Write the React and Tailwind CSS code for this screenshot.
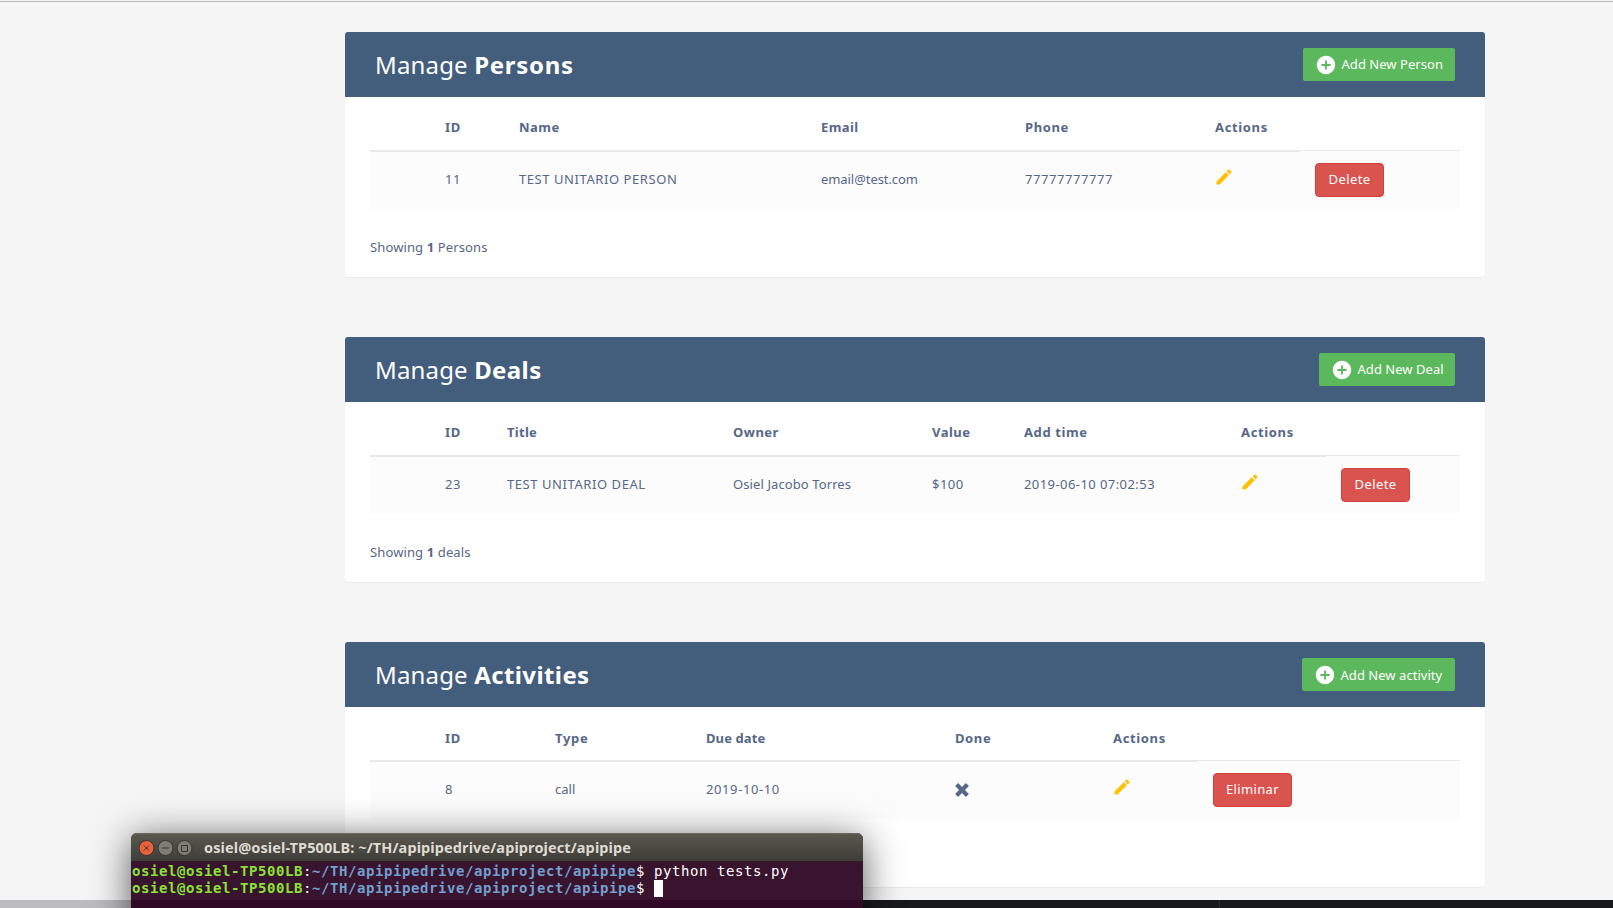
import React from "react";

const cards = [
  {
    name: "Persons", add: "Add New Person", addW: "w-[152px]", addPad: "pt-0", titleTrack: "tracking-[0.73px]",
    summary: "Persons", del: "Delete", delStyle: "w-[69px] tracking-[0.4px]", cols: "grid-cols-[60px_74px_302px_204px_190px_100px_160px]",
    headPad: "pb-[2px]",
    heads: [["ID", "tracking-[0.8px]"], ["Name", "tracking-[0.5px]"], ["Email", "tracking-[0.4px]"], ["Phone", "tracking-[0.6px]"], ["Actions", "tracking-[0.65px]"]],
    cells: [["11", "tracking-[0.5px]"], ["TEST UNITARIO PERSON", "tracking-[0.57px]"], ["email@test.com", "tracking-[-0.07px]"], ["77777777777", "tracking-[0.56px]"]],
  },
  {
    name: "Deals", add: "Add New Deal", addW: "w-[136px]", addPad: "pt-0", titleTrack: "tracking-[0.4px]",
    summary: "deals", del: "Delete", delStyle: "w-[69px] tracking-[0.4px]", cols: "grid-cols-[60px_62px_226px_199px_92px_217px_100px_134px]",
    headPad: "pb-[2px]",
    heads: [["ID", "tracking-[0.8px]"], ["Title", "tracking-[0.3px]"], ["Owner", "tracking-[0.5px]"], ["Value", "tracking-[0.5px]"], ["Add time", "tracking-[0.6px]"], ["Actions", "tracking-[0.65px]"]],
    cells: [["23", "tracking-[0.5px]"], ["TEST UNITARIO DEAL", "tracking-[0.57px]"], ["Osiel Jacobo Torres", "tracking-[0.1px]"], ["$100", "tracking-[0.5px]"], ["2019-06-10 07:02:53", "tracking-[0.43px]"]],
  },
  {
    name: "Activities", add: "Add New activity", addW: "w-[153px]", addPad: "pt-[2px]", titleTrack: "tracking-[0.4px]",
    summary: "", del: "Eliminar", delStyle: "w-[79px] tracking-[0.35px]", cols: "grid-cols-[60px_110px_151px_249px_158px_100px_262px]",
    headPad: "pb-0",
    heads: [["ID", "tracking-[0.8px]"], ["Type", "tracking-[0.7px]"], ["Due date", "tracking-[0.1px]"], ["Done", "tracking-[0.6px]"], ["Actions", "tracking-[0.65px]"]],
    cells: [["8", "tracking-[0.5px]"], ["call", "tracking-[0px]"], ["2019-10-10", "tracking-[0.6px]"], ["x", ""]],
  },
];

function Cross() {
  return (
    <svg className="h-[14px] w-[14px]" viewBox="0 0 14 14" fill="none" stroke="#566787" strokeWidth="4.2">
      <path d="M1.6 1.6 12.4 12.4M12.4 1.6 1.6 12.4" />
    </svg>
  );
}

function Card({ card }) {
  return (
    <section className="h-[245px] shrink-0 rounded-[3px] bg-white shadow-[0_1px_1px_rgba(0,0,0,0.05)]">
      <header className="flex h-[65px] items-start justify-between rounded-t-[3px] bg-[#435d7d] pt-4 pr-[30px] pl-[30px] text-white">
        <h2 className="text-[24px] leading-[34px] tracking-[0.15px]">
          Manage <b className={"font-bold " + card.titleTrack}>{card.name}</b>
        </h2>
        <button className={"flex h-[33px] items-center rounded-[2px] bg-[#5cb85c] pl-[12px] text-[13px] " + card.addW}>
          <svg className="mr-[4px] h-[22px] w-[22px] shrink-0" viewBox="0 0 24 24" fill="#fff">
            <path d="M12 2C6.48 2 2 6.48 2 12s4.48 10 10 10 10-4.48 10-10S17.520 2 12 2zm5 11h-4v4h-2v-4H7v-2h4V7h2v4h4v2z" />
          </svg>
          <span className={"pl-[0.5px] whitespace-nowrap tracking-[0.04px] " + card.addPad}>{card.add}</span>
        </button>
      </header>
      <div className="px-[25px] pt-[10px]">
        <div className={"grid h-[43px] text-[13px] font-bold " + card.cols}>
          <div />
          {card.heads.map(([h, track]) => (
            <div key={h} className={"flex items-center pl-[15px] " + card.headPad + " " + track}>{h}</div>
          ))}
        </div>
        <div className={"grid h-[59px] bg-[#fcfcfc] text-[13px] " + card.cols}>
          <div className="border-t-2 border-[#e9e9e9]" />
          {card.cells.map(([c, track]) => (
            <div key={c} className={"flex items-center border-t-2 border-[#e9e9e9] pb-px pl-[15px] whitespace-nowrap " + track}>
              {c === "x" ? <Cross /> : c}
            </div>
          ))}
          <div className="border-t-2 border-[#e9e9e9] pt-[15px] pl-[14px]">
            <svg className="h-[20px] w-[20px]" viewBox="0 0 24 24" fill="#ffc107">
              <path d="M3 17.250V21h3.750L17.810 9.940l-3.750-3.750L3 17.250zM20.710 7.040a1 1 0 0 0 0-1.410l-2.340-2.340a1 1 0 0 0-1.410 0l-1.830 1.830 3.750 3.750 1.830-1.830z" />
            </svg>
          </div>
          <div className="border-t border-[#e9e9e9] pt-3 pl-[15px]">
            <button className={"h-[34px] rounded-[4px] border border-[#d43f3a] bg-[#d9534f] text-[13px] text-white " + card.delStyle}>{card.del}</button>
          </div>
        </div>
        {card.summary && (
          <p className="pt-[28px] text-[13px] leading-[20px] tracking-[0.12px]">
            Showing <b>1</b> {card.summary}
          </p>
        )}
      </div>
    </section>
  );
}

export default function App() {
  return (
    <div className="relative h-[908px] w-[1613px] overflow-hidden bg-[#f5f5f5] font-['Noto_Sans',sans-serif] text-[#566787]">
      <div className="flex h-[900px] flex-col overflow-hidden">
        <div className="h-[2px] shrink-0 border-b border-[#bcbcbc] bg-[#f2f1f0]" />
        <main className="ml-[345px] flex w-[1140px] flex-col gap-[60px] pt-[30px]">
          {cards.map((c) => (
            <Card key={c.name} card={c} />
          ))}
        </main>
      </div>
      <div className="flex h-2 bg-[#18191b]">
        <div className="w-[296px] bg-[#bcbcbf]" />
        <div className="ml-[923px] w-px bg-[#2b2c2e]" />
      </div>
      <div className="absolute top-[833px] left-[131px] h-[90px] w-[732px] rounded-t-[6px] bg-[#39142e] shadow-[0_6px_38px_rgba(0,0,0,0.65)]">
        <div className="flex h-7 items-center rounded-t-[6px] border-t border-[#6b6a60] bg-gradient-to-b from-[#5a584e] to-[#3e3d38] pl-2">
          <svg className="h-4 w-[54px]" viewBox="0 0 54 16" fill="none" stroke="#35342f">
            <circle cx="7.500" cy="8" r="7.500" fill="#e9623a" />
            <path d="m5 5.500 5 5m0-5-5 5" />
            <circle cx="26.500" cy="8" r="7.500" fill="#7f7d76" />
            <path d="M23 8h7" />
            <circle cx="45.500" cy="8" r="7.500" fill="#7f7d76" />
            <path d="M42.500 5.500h6v6h-6z" />
          </svg>
          <span className="ml-[11px] text-[14.5px] font-bold tracking-[0.1px] whitespace-nowrap text-[#dfdbd2]">osiel@osiel-TP500LB: ~/TH/apipipedrive/apiproject/apipipe</span>
        </div>
        <div className="h-[39px] pt-[1px] pl-[1px] font-['DejaVu_Sans_Mono',monospace] text-[14px] leading-[17px] tracking-[0.57px] text-white">
          {["python tests.py", ""].map((cmd) => (
            <div key={cmd} className="flex h-[17px] pt-px whitespace-pre">
              <b className="text-[#8ae234]">osiel@osiel-TP500LB</b>:
              <b className="text-[#729fcf]">~/TH/apipipedrive/apiproject/apipipe</b>
              {"$ " + cmd}
              {cmd === "" && <span className="h-[17px] w-[9px] shrink-0 bg-white" />}
            </div>
          ))}
        </div>
        <div className="h-6 bg-[#300a24]" />
      </div>
    </div>
  );
}
